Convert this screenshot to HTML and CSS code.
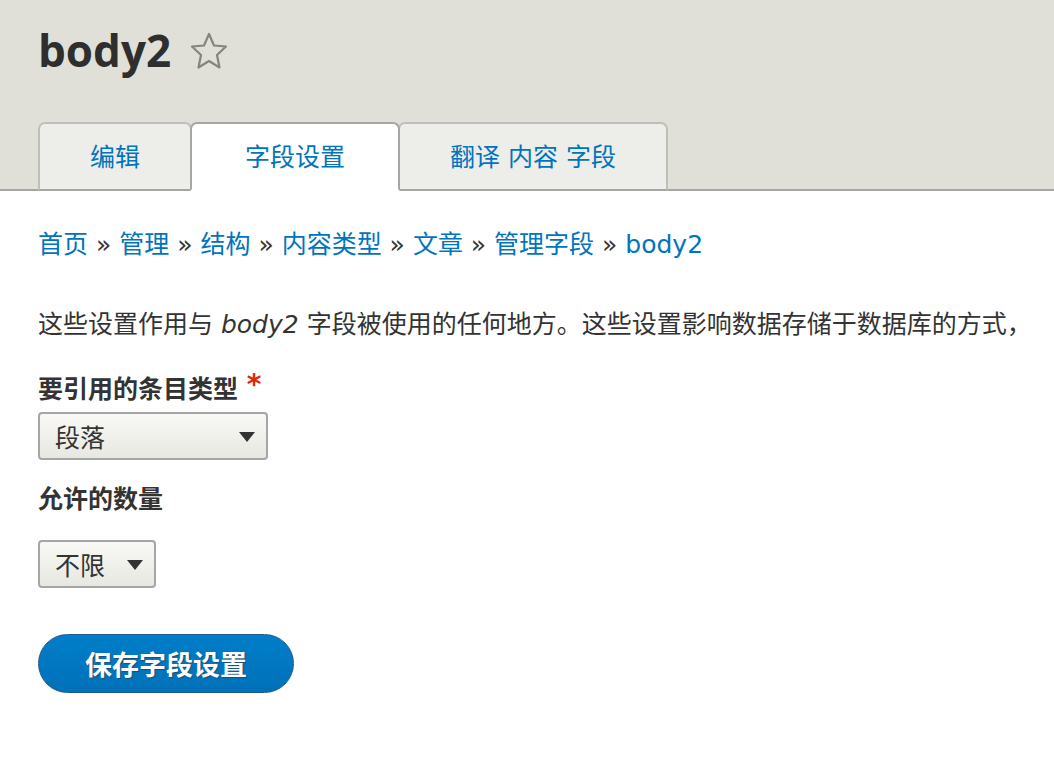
FILE: index.html
```html
<!DOCTYPE html>
<html lang="zh">

<head>
    <meta charset="UTF-8">
    <meta name="viewport" content="width=device-width, initial-scale=1.0">
    <title>body2 - 字段设置</title>
    <link rel="stylesheet" href="styles.css">
</head>

<body>
    <!-- cabeçalho com título e abas -->
    <div class="header">
        <h1 class="page-title">body2
            <svg class="star" width="40" height="40" viewBox="0 0 40 40">
                <polygon points="20,3 25,14.5 37,15.5 28,24 30.5,36.5 20,30 9.5,36.5 12,24 3,15.5 15,14.5"
                    fill="none" stroke="#85857a" stroke-width="2.2" stroke-linejoin="round" />
            </svg>
        </h1>
        <ul class="tabs">
            <li class="tab"><a href="#">编辑</a></li>
            <li class="tab active"><a href="#">字段设置</a></li>
            <li class="tab"><a href="#">翻译 内容 字段</a></li>
        </ul>
    </div>

    <div class="content">
        <div class="breadcrumb">
            <a href="#">首页</a> » <a href="#">管理</a> » <a href="#">结构</a> » <a href="#">内容类型</a> »
            <a href="#">文章</a> » <a href="#">管理字段</a> » <a href="#">body2</a>
        </div>

        <p class="intro">这些设置作用与 <em>body2</em> 字段被使用的任何地方。这些设置影响数据存储于数据库的方式，</p>

        <form action="">
            <label class="field-label">要引用的条目类型 <span class="required">*</span></label>
            <div class="select select-wide">
                <span>段落</span>
                <svg class="arrow" width="16" height="10" viewBox="0 0 16 10"><polygon points="0,0 16,0 8,10" fill="#333" /></svg>
            </div>

            <label class="field-label label-gap">允许的数量</label>
            <div class="select select-small">
                <span>不限</span>
                <svg class="arrow" width="16" height="10" viewBox="0 0 16 10"><polygon points="0,0 16,0 8,10" fill="#333" /></svg>
            </div>

            <button type="button" class="button-primary">保存字段设置</button>
        </form>
    </div>
</body>

</html>
```

FILE: styles.css
```css
/* estilo geral da página */
body {
    margin: 0;
    font-family: 'DejaVu Sans', 'Noto Sans CJK SC', sans-serif;
    font-size: 25px;
    color: #333;
    background: #fff;
    overflow: hidden;
}

a {
    color: #0074bd;
    text-decoration: none;
}

.header {
    background: #e0e0d8;
    border-bottom: 2px solid #a6a6a6;
    padding: 20px 38px 0;
}

.page-title {
    margin: 0;
    font-family: 'Open Sans', 'Noto Sans CJK SC', sans-serif;
    font-size: 44px;
    font-weight: bold;
    line-height: 60px;
    color: #2e2e2e;
    display: flex;
    align-items: center;
}

.star {
    margin-left: 18px;
    margin-top: 2px;
}

.tabs {
    list-style: none;
    margin: 42px 0 -2px;
    padding: 0;
    display: flex;
}

.tab {
    box-sizing: border-box;
    height: 69px;
    line-height: 67px;
    padding: 0 50px;
    background: #ededea;
    border: 2px solid #bfbfba;
    border-bottom-color: #a6a6a6;
    border-radius: 7px 7px 0 0;
    margin-left: -2px;
}

.tab:first-child {
    margin-left: 0;
}

.tab.active {
    position: relative;
    background: #fff;
    border-color: #a6a6a6;
    border-bottom-color: #fff;
    padding: 0 53px;
}

.content {
    padding: 0 38px;
}

.breadcrumb {
    margin-top: 36px;
    line-height: 36px;
    white-space: nowrap;
}

.intro {
    margin: 44px 0 0;
    line-height: 36px;
    white-space: nowrap;
}

.intro em {
    font-style: italic;
}

form {
    margin-top: 24px;
}

.field-label {
    display: block;
    font-weight: bold;
    line-height: 36px;
}

.label-gap {
    margin-top: 22px;
}

.required {
    color: #e32700;
    font-size: 28px;
    vertical-align: 4px;
}

.select {
    box-sizing: border-box;
    height: 48px;
    margin-top: 4px;
    padding: 0 11px 0 15px;
    display: flex;
    align-items: center;
    justify-content: space-between;
    border: 2px solid #a6a6a6;
    border-radius: 4px;
    background: linear-gradient(#f8f8f5, #e8e8e2);
}

.select-wide {
    width: 230px;
}

.select-small {
    width: 118px;
    margin-top: 22px;
}

.arrow {
    margin-top: 2px;
}

.button-primary {
    display: block;
    margin-top: 46px;
    box-sizing: border-box;
    height: 59px;
    width: 256px;
    font-family: 'DejaVu Sans', 'Noto Sans CJK SC', sans-serif;
    font-size: 27px;
    font-weight: bold;
    color: #fff;
    text-shadow: 1px 1px 1px #1b4d78;
    background: linear-gradient(#007ec9, #0071b8);
    border: 1px solid #1e5c90;
    border-radius: 30px;
}
```
